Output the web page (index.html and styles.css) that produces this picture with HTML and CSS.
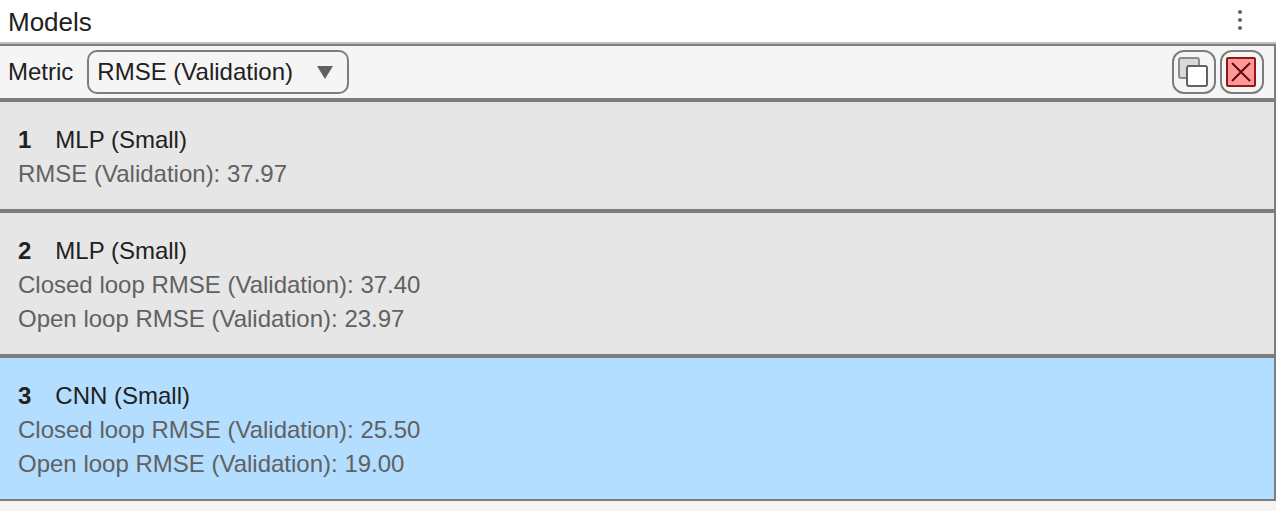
FILE: index.html
```html
<!DOCTYPE html>
<html lang="en">
<head>
    <meta charset="UTF-8">
    <meta name="viewport" content="width=device-width, initial-scale=1.0">
    <title>Models</title>
    <link rel="stylesheet" href="styles.css">
</head>
<body>

<header class="panel-header">
    <h1>Models</h1>
    <button class="menu-button" type="button" aria-label="Panel menu">
        <svg width="8" height="24" viewBox="0 0 8 24">
            <circle cx="4" cy="2" r="2"/>
            <circle cx="4" cy="10" r="2"/>
            <circle cx="4" cy="18" r="2"/>
        </svg>
    </button>
</header>

<main class="panel">
    <div class="toolbar">
        <label for="metric">Metric</label>
        <div class="select-box">
            <select id="metric">
                <option>RMSE (Validation)</option>
                <option>MAE (Validation)</option>
            </select>
            <svg class="arrow" width="16" height="13" viewBox="0 0 16 13">
                <path d="M0 0H16L8 13Z"/>
            </svg>
        </div>

        <div class="actions">
            <button class="tool-button" type="button" aria-label="Duplicate model">
                <svg width="30" height="30" viewBox="0 0 30 30">
                    <rect x="1" y="1" width="20" height="20" rx="2" fill="#d9d9d9" stroke="#8c8c8c" stroke-width="2"/>
                    <rect x="9" y="9" width="20" height="20" rx="2" fill="#fff" stroke="#616161" stroke-width="2"/>
                </svg>
            </button>
            <button class="tool-button" type="button" aria-label="Delete model">
                <svg width="30" height="30" viewBox="0 0 30 30">
                    <rect x="1" y="1" width="28" height="28" rx="1" fill="#ff9999" stroke="#8f1a17" stroke-width="2"/>
                    <path d="M6 6L24 24M24 6L6 24" fill="none" stroke="#5c0c0a" stroke-width="2"/>
                </svg>
            </button>
        </div>
    </div>

    <ol class="models">
        <li class="model">
            <h2><b>1</b>MLP (Small)</h2>
            <p>RMSE (Validation): 37.97</p>
        </li>
        <li class="model">
            <h2><b>2</b>MLP (Small)</h2>
            <p>Closed loop RMSE (Validation): 37.40</p>
            <p>Open loop RMSE (Validation): 23.97</p>
        </li>
        <li class="model selected">
            <h2><b>3</b>CNN (Small)</h2>
            <p>Closed loop RMSE (Validation): 25.50</p>
            <p>Open loop RMSE (Validation): 19.00</p>
        </li>
    </ol>
</main>

</body>
</html>
```
FILE: styles.css
```css
* {
    box-sizing: border-box;
}
body {
    margin: 0;
    background-color: #f4f4f4;
    color: #212121;
    font-family: "Liberation Sans", Arial, sans-serif;
    font-size: 24px;
    line-height: 34px;
}
h1, h2, p, ol {
    margin: 0;
    padding: 0;
}
button {
    padding: 0;
    cursor: pointer;
}
svg {
    display: block;
}

/* Title bar */
.panel-header {
    display: flex;
    align-items: center;
    justify-content: space-between;
    padding: 5px 32px 3px 8px;
    background-color: #fff;
    border-bottom: 2px solid #bfbfbf;
}
.panel-header h1 {
    font-size: 26px;
    font-weight: normal;
}
.menu-button {
    background: none;
    border: none;
    fill: #616161;
}

.panel {
    border: 2px solid #7d7d7d;
    border-left: none;
}

/* Metric picker and model actions */
.toolbar {
    display: flex;
    align-items: center;
    padding: 4px 10px 4px 8px;
    background-color: #f5f5f5;
}
.select-box {
    position: relative;
    width: 262px;
    margin-left: 14px;
}
.select-box select {
    display: block;
    width: 100%;
    height: 44px;
    padding: 0 40px 0 8px;
    appearance: none;
    background: none;
    border: 2px solid #7d7d7d;
    border-radius: 10px;
    color: inherit;
    font: inherit;
}
.select-box .arrow {
    position: absolute;
    top: 16px;
    right: 16px;
    fill: #616161;
    pointer-events: none;
}
.actions {
    display: flex;
    gap: 4px;
    margin-left: auto;
}
.tool-button {
    display: flex;
    align-items: center;
    justify-content: center;
    width: 44px;
    height: 44px;
    padding-right: 2px;
    background: none;
    border: 2px solid #7d7d7d;
    border-radius: 12px;
}

/* Model list */
.models {
    list-style: none;
}
.model {
    padding: 21px 18px 18px;
    background-color: #e6e6e6;
    border-top: 4px solid #7d7d7d;
}
.model h2 {
    display: flex;
    gap: 24px;
    font-size: 24px;
    font-weight: normal;
}
.model p {
    color: #616161;
}
.model.selected {
    background-color: #b3deff;
}
```
